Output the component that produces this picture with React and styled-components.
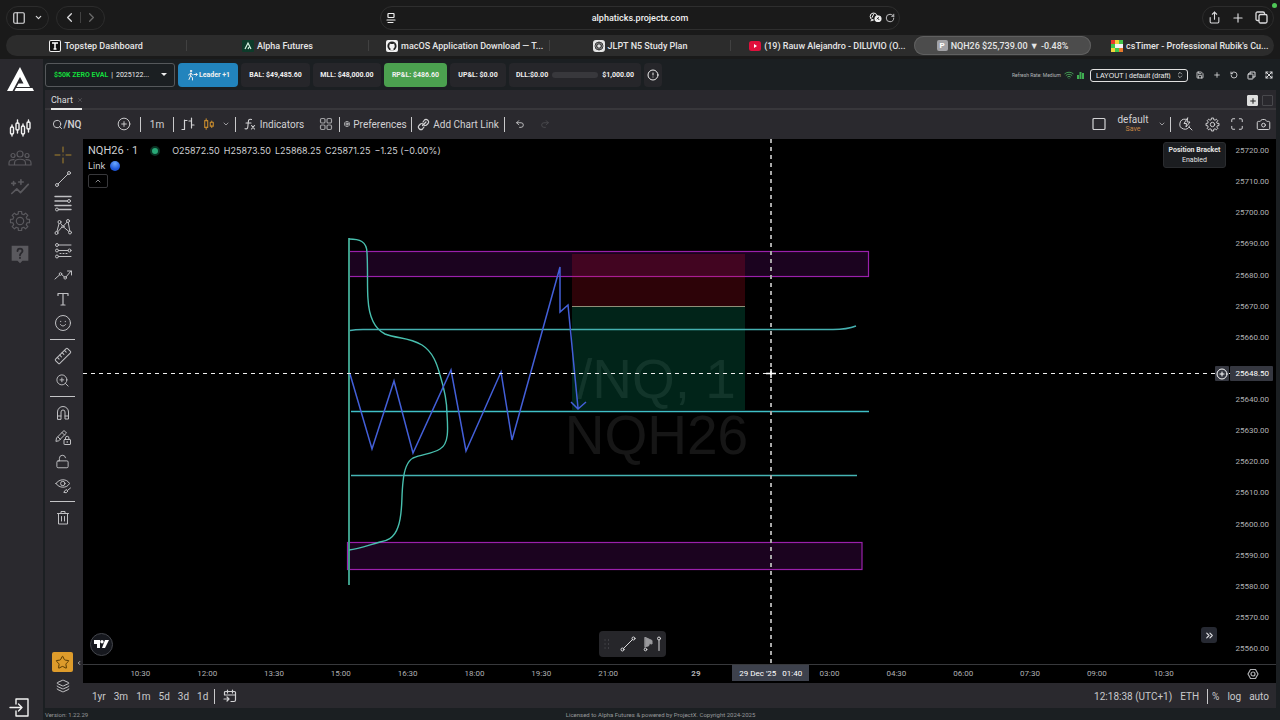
import React from "react";
import styled, { createGlobalStyle } from "styled-components";
import {
  PanelLeft, ChevronDown, ChevronLeft, ChevronRight, ChevronUp, Share, Plus, RotateCw,
  Wifi, Save, Undo2, Redo2, RotateCcw, Search, CirclePlus, Maximize, Camera,
  ZoomIn, LockOpen, Star, Layers, ChevronsRight, CircleAlert, ChevronsUpDown,
} from "lucide-react";

const GlobalStyle = createGlobalStyle`
  * { box-sizing: border-box; }
  body { margin: 0; background: #1a1a1a; color: #dcdcde; font-family: Roboto, "Liberation Sans", sans-serif; }
  button, select { font: inherit; color: inherit; background: none; border: 0; padding: 0; margin: 0; }
  svg { display: block; flex: none; }
`;

const Page = styled.div`
  min-height: 100vh;
  display: flex;
  flex-direction: column;
`;

/* Browser chrome */
const BrowserBar = styled.header`
  position: relative;
  display: flex;
  align-items: center;
  height: 35px;
  padding: 0 6px;
  gap: 6px;
`;
const Pill = styled.div`
  display: flex;
  align-items: center;
  justify-content: center;
  gap: ${(p) => p.$gap}px;
  height: 24px;
  padding: 0 5px;
  border: 1px solid #2c2c2c;
  border-radius: 12px;
`;
const Side = styled.div`
  flex: 1;
  display: flex;
  gap: 7px;
  justify-content: ${(p) => (p.$end ? "flex-end" : "flex-start")};
`;
const AddressBar = styled.div`
  display: grid;
  grid-template-columns: 40px 1fr 40px;
  align-items: center;
  width: 41%;
  height: 24px;
  padding: 0 4px;
  border: 1px solid #2e2e2e;
  border-radius: 12px;
  font-size: 9px;
  font-weight: 500;
  color: #f0f0f0;
  text-align: center;
`;
const AddressIcons = styled.span`
  display: flex;
  gap: 3px;
  align-items: center;
  justify-content: ${(p) => (p.$end ? "flex-end" : "flex-start")};
`;
const IconButton = styled.button`
  display: flex;
  align-items: center;
  justify-content: center;
  width: ${(p) => (p.$w ? p.$w + "px" : "auto")};
  height: ${(p) => (p.$h ? p.$h + "px" : "auto")};
  color: ${(p) => p.$color || "#dcdcde"};
`;
const RecordDot = styled.span`
  position: absolute;
  top: 3px;
  right: 3px;
  width: 5px;
  height: 5px;
  border-radius: 50%;
  background: #4fc857;
`;
const TabStrip = styled.nav`
  display: flex;
  height: 21px;
  margin: 0 6px 3px;
  background: #2c2c2c;
  border-radius: 11px;
`;
const BrowserTab = styled.button`
  flex: 1 1 0;
  min-width: 0;
  margin: 1px 2px;
  border-radius: 10px;
  background: ${(p) => (p.$active ? "#4c4c4c" : "transparent")};
  box-shadow: ${(p) => (p.$active ? "inset 0 0 0 1px #606060" : "none")};
  font-size: 9px;
  font-weight: 500;
  color: #e6e6e6;
  white-space: nowrap;
`;
const TabLabel = styled.span`
  display: flex;
  align-items: center;
  justify-content: center;
  gap: 3px;
  padding-left: ${(p) => (p.$long ? 12 : 0)}px;
`;
const TabDivider = styled.span`
  width: 1px;
  height: 11px;
  align-self: center;
  background: ${(p) => (p.$hidden ? "transparent" : "#414141")};
`;

/* Application frame */
const AppFrame = styled.div`
  flex: 1;
  display: flex;
  background: #1b1f22;
  padding-right: 4px;
`;
const Sidebar = styled.aside`
  display: flex;
  flex-direction: column;
  align-items: center;
  width: 43px;
  margin-right: 2px;
  padding: 8px 3px 0 0;
  background: #2a292e;
`;
const SideItem = styled.button`
  display: flex;
  align-items: center;
  justify-content: center;
  width: 30px;
  height: ${(p) => p.$h || 30}px;
  color: ${(p) => (p.$active ? "#f2f2f2" : "#5a595e")};
`;
const SideNav = styled.nav`
  display: flex;
  flex-direction: column;
  flex: 1;
  padding-top: 21px;
`;
const Main = styled.main`
  flex: 1;
  min-width: 0;
  display: flex;
  flex-direction: column;
`;
const AccountBar = styled.div`
  display: flex;
  align-items: center;
  gap: 3px;
  height: 31px;
  padding-top: 1px;
  font-size: 7px;
  font-weight: 700;
  color: #f0f0f0;
`;
const AccountBox = styled.label`
  display: flex;
  align-items: center;
  width: 130px;
  height: 24px;
  padding: 0 7px 0 8px;
  border: 1px solid #55585b;
  border-radius: 3px;
  font-weight: 400;
`;
const AccountName = styled.span`
  color: #14dc3c;
  font-weight: 700;
`;
const BareSelect = styled.select`
  appearance: none;
  flex: 1;
  min-width: 0;
  outline: 0;
`;
const Bar = styled.span`
  padding: 0 3px;
`;
const LeaderButton = styled.button`
  display: flex;
  align-items: center;
  justify-content: center;
  gap: 1px;
  width: 60px;
  height: 24px;
  border-radius: 4px;
  background: #2284bd;
`;
const Stat = styled.div`
  display: flex;
  align-items: center;
  justify-content: center;
  gap: 4px;
  width: ${(p) => p.$w}px;
  height: 24px;
  border-radius: 4px;
  background: ${(p) => (p.$green ? "#4ba14f" : "#26262a")};
  white-space: nowrap;
`;
const LossTrack = styled.span`
  width: 46px;
  height: 6px;
  border-radius: 3px;
  background: #38383c;
`;
const Spacer = styled.span`
  flex: 1;
`;
const Refresh = styled.span`
  font-size: 5px;
  font-weight: 400;
  color: #b4b6b8;
`;
const LayoutBox = styled.label`
  display: flex;
  align-items: center;
  width: 98px;
  height: 13px;
  padding: 0 3px 0 5px;
  border: 1px solid #e0e0e0;
  border-radius: 3px;
  font-family: "Liberation Sans", sans-serif;
  font-size: 7px;
  font-weight: 400;
  margin: 0 2px 0 3px;
`;
const HeaderIcons = styled.div`
  display: flex;
  justify-content: space-between;
  width: 83px;
  padding: 0 3px;
`;
const PanelTabs = styled.div`
  display: flex;
  align-items: center;
  height: 20px;
  padding: 0 3px 0 6px;
  gap: 4px;
  background: #29282d;
  border-bottom: 2px solid #38373b;
`;
const PanelTab = styled.button`
  display: flex;
  align-items: center;
  gap: 5px;
  height: 20px;
  margin-top: 2px;
  padding-top: 2px;
  width: 31px;
  border-bottom: 2px solid #e8e8e8;
  font-size: 9px;
`;
const TabTool = styled.button`
  display: flex;
  align-items: center;
  justify-content: center;
  width: 11px;
  height: 11px;
  margin-top: 3px;
  border: 1px solid ${(p) => (p.$solid ? "#dedede" : "#48484c")};
  border-radius: 1px;
  background: ${(p) => (p.$solid ? "#dedede" : "transparent")};
  color: #222;
`;

const ChartToolbar = styled.div`
  display: flex;
  align-items: center;
  height: 29px;
  padding: 0 0 1px 4px;
  background: #2a292e;
  font-size: 10px;
`;
const ToolbarButton = styled.button`
  display: flex;
  align-items: center;
  justify-content: center;
  gap: ${(p) => p.$gap || 4}px;
  width: ${(p) => p.$w}px;
  height: 26px;
  white-space: nowrap;
  font-weight: ${(p) => (p.$strong ? 500 : 400)};
  color: ${(p) => p.$color || "#d2d2d4"};
`;
const ToolbarLine = styled.span`
  width: 1px;
  height: 15px;
  margin-left: ${(p) => p.$before || 0}px;
  background: #c9c9cb;
`;
const LayoutName = styled.span`
  display: flex;
  flex-direction: column;
  align-items: center;
  line-height: 10px;
  small { font-size: 7px; line-height: 8px; color: #c68745; }
`;

const Workspace = styled.div`
  flex: 1;
  display: flex;
  background: #2a292e;
`;
const DrawTools = styled.div`
  display: flex;
  flex-direction: column;
  align-items: center;
  width: 38px;
  padding: 4px 3px 10px 0;
`;
const ToolLine = styled.span`
  width: 25px;
  height: 1px;
  margin: 4px 0;
  background: #c4c4c6;
`;
const Favorite = styled.button`
  display: flex;
  align-items: center;
  justify-content: center;
  width: 21px;
  height: 20px;
  border-radius: 2px;
  background: #dd9b2b;
  color: #4f3300;
  margin-bottom: 2px;
`;
const ChartColumn = styled.div`
  position: relative;
  flex: 1;
  min-width: 0;
  display: flex;
  flex-direction: column;
`;
const ToolsHandle = styled.button`
  position: absolute;
  left: -7px;
  bottom: 42px;
`;
const ChartGrid = styled.div`
  flex: 1;
  display: grid;
  grid-template-columns: 1fr 46px;
  grid-template-rows: 1fr 19px;
  background: #000;
  font-size: 8px;
  color: #b0b1b4;
`;
const Plot = styled.div`
  position: relative;
  min-height: 500px;
`;
const Drawing = styled.svg`
  position: absolute;
  inset: 0;
  width: 100%;
  height: 100%;
`;
const Watermark = styled.div`
  position: absolute;
  inset: 0;
  display: flex;
  flex-direction: column;
  align-items: center;
  justify-content: center;
  padding-top: 10px;
  font-family: "Liberation Sans", Arial, sans-serif;
  font-size: 55px;
  line-height: 56px;
  color: rgba(170, 170, 170, 0.13);
`;
const Legend = styled.div`
  position: absolute;
  top: 5px;
  left: 5px;
  display: flex;
  flex-direction: column;
  align-items: flex-start;
  gap: 2px;
  font-family: Inter, sans-serif;
  font-size: 9px;
  line-height: 13px;
  color: #cfd0d3;
`;
const LegendRow = styled.div`
  display: flex;
  align-items: center;
  gap: ${(p) => p.$gap}px;
`;
const Symbol = styled.span`
  font-family: Roboto, sans-serif;
  font-size: 11px;
`;
const MarketDot = styled.span`
  width: 10px;
  height: 10px;
  border-radius: 50%;
  border: 2px solid #0a3324;
  background: #29a877;
  margin: 0 8px;
`;
const LinkBall = styled.span`
  width: 10px;
  height: 10px;
  border-radius: 50%;
  background: radial-gradient(circle at 50% 25%, #6aa8ff, #1d56d8 65%);
`;
const CollapseButton = styled.button`
  display: flex;
  align-items: center;
  justify-content: center;
  width: 20px;
  height: 14px;
  border: 1px solid #38383b;
  border-radius: 2px;
`;
const Bracket = styled.div`
  position: absolute;
  top: 3px;
  right: 4px;
  width: 63px;
  padding: 2px 0;
  border: 1px solid #2a2c2f;
  border-radius: 3px;
  background: #1b1d20;
  font-size: 7px;
  line-height: 10px;
  text-align: center;
  color: #e3e3e3;
`;
const TvBadge = styled.div`
  position: absolute;
  left: 7px;
  bottom: 8px;
  display: flex;
  align-items: center;
  justify-content: center;
  width: 23px;
  height: 23px;
  border: 1px solid #44464c;
  border-radius: 50%;
  background: #16181e;
`;
const FloatingTools = styled.div`
  position: absolute;
  left: 45%;
  bottom: 7px;
  display: flex;
  align-items: center;
  width: 67px;
  height: 26px;
  border-radius: 4px;
  background: #26262a;
`;
const ScrollEnd = styled.button`
  position: absolute;
  right: 13px;
  bottom: 21px;
  display: flex;
  align-items: center;
  justify-content: center;
  width: 16px;
  height: 16px;
  border-radius: 3px;
  background: #262932;
  color: #e0e0e4;
`;
const PriceAxis = styled.div`
  position: relative;
  display: flex;
  flex-direction: column;
  justify-content: space-between;
  padding: 6px 7px 9px 0;
  line-height: 12px;
  text-align: right;
`;
const PriceSlot = styled.span`
  height: 12px;
`;
const PriceTag = styled.div`
  position: absolute;
  top: 45%;
  right: 3px;
  display: flex;
  align-items: center;
  gap: 1px;
  height: 15px;
  margin-top: -9px;
  line-height: 15px;
  color: #fff;
`;
const PriceTagPart = styled.span`
  display: flex;
  align-items: center;
  justify-content: flex-end;
  width: ${(p) => p.$w}px;
  height: 15px;
  padding-right: ${(p) => p.$pad}px;
  border-radius: 1px;
  background: #353740;
`;
const TimeAxis = styled.div`
  position: relative;
  display: grid;
  grid-template-columns: 24fr repeat(8, 67fr) 109fr 46fr repeat(6, 67fr) 33fr;
  line-height: 18px;
  border-top: 1px solid #38393c;
  text-align: center;
`;
const TimeTag = styled.div`
  position: absolute;
  top: 0;
  left: 60%;
  width: 77px;
  height: 16px;
  margin-left: -39px;
  line-height: 18px;
  background: #3d414c;
  color: #fff;
  white-space: pre;
`;
const AxisCorner = styled.button`
  display: flex;
  align-items: center;
  justify-content: center;
  border-top: 1px solid #38393c;
`;
const RangeBar = styled.div`
  display: flex;
  align-items: center;
  height: 25px;
  padding: 1px 3px 0 5px;
  font-size: 10px;
  color: #c9c9cc;
`;
const RangeButton = styled.button`
  padding: 0 4px;
  height: 20px;
`;
const Footer = styled.footer`
  display: grid;
  grid-template-columns: 1fr auto 1fr;
  align-items: center;
  height: 12px;
  font-size: 6px;
  color: #97999b;
  background: #1b1f22;
`;

const Glyph = ({ size = 24, w = 1, children, color = "currentColor", box = 24 }) => (
  <svg width={size} height={size} viewBox={`0 0 ${box} ${box}`} fill="none" stroke={color} strokeWidth={w} strokeLinecap="round" strokeLinejoin="round" aria-hidden="true">
    {children}
  </svg>
);

/* Outline of a cog with eight flat teeth, centred in a 24-unit box */
const cogOutline = (() => {
  const pts = [];
  for (let i = 0; i < 8; i++) {
    const base = (i * Math.PI) / 4;
    [[-0.24, 8], [-0.17, 10.5], [0.17, 10.5], [0.24, 8]].forEach(([a, r]) => {
      pts.push(`${(12 + r * Math.cos(base + a)).toFixed(2)} ${(12 + r * Math.sin(base + a)).toFixed(2)}`);
    });
  }
  return `M${pts.join("L")}Z`;
})();
const Cog = ({ size, w, hub = 3.5 }) => (
  <Glyph size={size} w={w}><path d={cogOutline} /><circle cx="12" cy="12" r={hub} /></Glyph>
);

const faviconArt = {
  topstep: (<><rect x="0" y="0" width="12" height="12" rx="2" fill="#f1f1f1" /><rect x="1" y="1" width="10" height="10" rx="1" fill="#111" /><path d="M3 3h6M6 3v6M4.500 9h3" stroke="#fff" strokeWidth="1.500" /></>),
  alpha: (<><rect width="12" height="12" rx="1" fill="#0d3b2a" /><path d="M3 9l3-6 3 6M6 9l1-2" stroke="#d8f5e4" strokeWidth="1.200" fill="none" /></>),
  github: (<><rect width="12" height="12" rx="2" fill="#f1f1f1" /><circle cx="6" cy="6" r="4.600" fill="#222" /><path d="M4.500 10.400V8.500C3 8 3 5.500 3.700 4.800L3.700 3.400 5 4h2l1.300-.6v1.400C9 5.500 9 8 7.500 8.500v1.900z" fill="#f1f1f1" /></>),
  gpt: (<><rect width="12" height="12" rx="3" fill="#e4e4e4" /><g fill="none" stroke="#333" strokeWidth="0.900"><circle cx="6" cy="6" r="4" /><path d="M6 2l3.500 6h-7zM6 10L2.500 4h7z" /></g></>),
  youtube: (<><rect y="1" width="12" height="10" rx="2.500" fill="#e0103c" /><path d="M5 4l3 2-3 2z" fill="#fff" /></>),
  cube: (<><path fill="#e83a2c" d="M0 0h4v4H0z" /><path fill="#f0d53a" d="M4 0h4v4H4zM0 8h4v4H0z" /><path fill="#41c64a" d="M8 0h4v4H8zM0 4h4v4H0zM4 8h4v4H4z" /><path fill="#f2f2f2" d="M4 4h8v4H4z" /><path fill="#e87a2c" d="M8 8h4v4H8z" /></>),
};
const FavBadge = styled.span`
  display: flex;
  align-items: center;
  justify-content: center;
  width: 11px;
  height: 11px;
  border-radius: 2px;
  background: #a2a2a6;
  font-size: 8px;
  font-weight: 700;
  color: #fff;
`;
const Favicon = ({ kind }) =>
  kind === "p" ? <FavBadge>P</FavBadge> : <svg width="12" height="12" viewBox="0 0 12 12" aria-hidden="true">{faviconArt[kind]}</svg>;

const tabs = [
  ["topstep", "Topstep Dashboard"],
  ["alpha", "Alpha Futures"],
  ["github", "macOS Application Download — T..."],
  ["gpt", "JLPT N5 Study Plan"],
  ["youtube", "(19) Rauw Alejandro - DILUVIO (O..."],
  ["p", "NQH26 $25,739.00 ▼ -0.48%"],
  ["cube", "csTimer - Professional Rubik's Cu..."],
];

const drawTools = [
  ["Cross", <Glyph color="#a8842c"><path d="M12 4v5M12 15v5M4 12h5M15 12h5M12 12h.1" /></Glyph>],
  ["Trend line", <Glyph><circle cx="6" cy="18" r="1.500" /><circle cx="18" cy="6" r="1.500" /><path d="M7 17L17 7" /></Glyph>],
  ["Fib retracement", <Glyph><path d="M4 5.500h16M4 10h12.500M4 14.500h16M7.500 18.500H20" strokeWidth="1.400" /><circle cx="18" cy="10" r="1.500" /><circle cx="6" cy="18.500" r="1.500" /></Glyph>],
  ["Pattern", <Glyph><path d="M5.500 18L8.500 7l3.500 4.500L17 6l2 11.500L12 11.500z" /><g fill="#2a292e"><circle cx="5.500" cy="18" r="1.500" /><circle cx="8.500" cy="7" r="1.500" /><circle cx="12" cy="11.500" r="1" /><circle cx="17" cy="6" r="1.500" /><circle cx="19" cy="17.500" r="1.500" /></g></Glyph>],
  ["Forecast", <Glyph><path d="M7.500 6H20M7.500 11.500h9.500M7.500 17.500H20" /><path d="M9 14.500h8" strokeDasharray="1 2" /><circle cx="6" cy="6" r="1.500" /><circle cx="6" cy="11.500" r="1.500" /><circle cx="6" cy="17.500" r="1.500" /><circle cx="18.500" cy="11.500" r="1.500" /></Glyph>],
  ["Arrow path", <Glyph><path d="M4 16l4.500-4M10.500 11.500l3 2.500M15 14l5-6M16.500 8H20.500V12" /><circle cx="9.500" cy="11" r="1.300" /><circle cx="14.200" cy="14.800" r="1.300" /></Glyph>],
  ["Text", <Glyph w={1.2}><path d="M7 8.500V6.500h10v2M12 6.500v11.500M10 18h4" /></Glyph>],
  ["Emoji", <Glyph><circle cx="12" cy="12" r="7.500" /><path d="M9.500 13.500c1 2 4 2 5 0M9.700 10.300v.4M14.300 10.300v.4" /></Glyph>],
  null,
  ["Measure", <Glyph><g transform="rotate(-45 12 12)"><rect x="3.500" y="9" width="17" height="6" rx="1" /><path d="M7 9v2.500M10.300 9v2.500M13.700 9v2.500M17 9v2.500" /></g></Glyph>],
  ["Zoom", <ZoomIn size={15} strokeWidth={1.5} />],
  null,
  ["Magnet", <Glyph><path d="M6.500 18v-7a5.500 5.500 0 0111 0v7h-3.500v-7a2 2 0 00-4 0v7zM6.500 15h3.500M14 15h3.500" /></Glyph>],
  ["Keep drawing", <Glyph><path d="M5 16l.5-3 7.500-7.500 2.500 2.500L8 15.500zM11 7.500l2.500 2.500M7 12l2.500 2.500" /><rect x="13" y="14.500" width="6.500" height="5" rx="0.500" /><path d="M14.500 14.500v-1.500a1.700 1.700 0 013.400 0v1.500M16.200 16.500v1" /></Glyph>],
  ["Lock", <LockOpen size={15} strokeWidth={1.5} />],
  ["Hide", <Glyph><path d="M5 10.500C8 5.500 16 5.500 18.500 10.500 16 15.500 8 15.500 5 10.500z" /><circle cx="11.800" cy="10.500" r="2.200" /><path d="M13 19l2-2.500 2 1.500-1.500 1.500zM17 17l2.500-2" /></Glyph>],
  null,
  ["Remove", <Glyph><path d="M6.500 7.500h11M10 7.500V5.500h4v2M7.500 7.500V18h9V7.500M10.500 10.500V15M13.500 10.500V15" /></Glyph>],
];

/* The 25650 label sits behind the crosshair price tag, so its slot stays empty */
const prices = Array.from({ length: 17 }, (_, i) => 25720 - i * 10);
const times = ["", "10:30", "12:00", "13:30", "15:00", "16:30", "18:00", "19:30", "21:00", "29", "", "03:00", "04:30", "06:00", "07:30", "09:00", "10:30", ""];

function ChartDrawing() {
  return (
    <Drawing viewBox="0 0 1147 525" preserveAspectRatio="none" fill="none" aria-label="Price chart drawings">
      <rect x="266" y="112.500" width="519.500" height="25" fill="#a010b8" fillOpacity="0.170" stroke="#9a20ab" strokeWidth="1.200" />
      <rect x="264.500" y="403.500" width="514.500" height="27" fill="#a010b8" fillOpacity="0.170" stroke="#9a20ab" strokeWidth="1.200" />
      <rect x="489" y="115" width="173" height="52" fill="#f0102a" fillOpacity="0.190" />
      <rect x="489" y="167" width="173" height="104" fill="#06a878" fillOpacity="0.210" />
      <path d="M489 167.500H662" stroke="#8f8f78" />
      <path d="M266 99V446" stroke="#3d9c88" strokeWidth="2" />
      <path d="M266 100C276 100 284 102 284 114C285 130 284 150 285 160C286 178 292 190 302 195C315 200 325 198 339 206C350 213 354 225 357 236C362 252 364 262 364 275C365 290 366 305 357 310C349 315 340 315 330 319C323 323 321 332 320 343C318 360 320 375 315 388C311 400 303 402 297 403C286 406 276 410 266 411" stroke="#48bfae" strokeWidth="1.400" />
      <path d="M267 191.500Q272 190.500 280 190.500H750Q764 190.500 773 187" stroke="#45b0b0" strokeWidth="1.500" />
      <path d="M268 272.500H786" stroke="#3fbfc6" strokeWidth="1.600" />
      <path d="M268 336.500H774" stroke="#45b4b4" strokeWidth="1.600" />
      <path d="M267 235L289 310 311 242 330 314 368 231 383 312 418 233 429 301 477 128 477 173 485 166 495 269M488 263L495 270 503 263" stroke="#435fd8" strokeWidth="1.500" />
      <path d="M0 234.500H1147" stroke="#f0f0f0" strokeDasharray="4 4" />
      <path d="M688 0V525" stroke="#a8a8a8" strokeWidth="2" strokeDasharray="4 4" />
      <path d="M683 234.500h10M688 230v9" stroke="#fff" strokeWidth="1.500" />
    </Drawing>
  );
}

export default function App() {
  return (
    <Page>
      <GlobalStyle />
      <BrowserBar>
        <Side>
          <Pill $gap={8}>
            <IconButton aria-label="Sidebar"><PanelLeft size={14} strokeWidth={2} /></IconButton>
            <IconButton aria-label="Tab groups"><ChevronDown size={9} strokeWidth={3} /></IconButton>
          </Pill>
          <Pill $gap={3}>
            <IconButton aria-label="Back"><ChevronLeft size={15} /></IconButton>
            <TabDivider />
            <IconButton aria-label="Forward" $color="#6a6a6a"><ChevronRight size={15} /></IconButton>
          </Pill>
        </Side>
        <AddressBar>
          <AddressIcons>
            <Glyph size={12} box={12} w={1.2}><rect x="3" y="1.500" width="6" height="4" rx="0.500" /><path d="M2 8h8M3 10.500h5" /></Glyph>
          </AddressIcons>
          <span>alphaticks.projectx.com</span>
          <AddressIcons $end>
            <Glyph size={13} box={13} w={1}><path d="M8 4.500A3.500 3.500 0 104.500 9L2 9.800M3 6.500l1.500-3" /><rect x="6" y="5" width="6" height="5.500" rx="2" fill="currentColor" /><path d="M8 8l1.500-1.500M8.500 7L10 8.700" stroke="#222" /></Glyph>
            <IconButton aria-label="Reload"><RotateCw size={10} /></IconButton>
          </AddressIcons>
        </AddressBar>
        <Side $end>
          <Pill $gap={10}>
            <IconButton aria-label="Share"><Share size={13} /></IconButton>
            <IconButton aria-label="New tab"><Plus size={14} /></IconButton>
            <IconButton aria-label="Tab overview"><Glyph size={13} box={13} w={1.3}><path d="M3.500 9.500H2.500q-1.500 0-1.500-1.500V2.500Q1 1 2.500 1H8q1.500 0 1.500 1.500" /><rect x="4" y="3.500" width="8" height="8.500" rx="1.500" /></Glyph></IconButton>
          </Pill>
        </Side>
        <RecordDot />
      </BrowserBar>
      <TabStrip>
        {tabs.map(([kind, title], i) => (
          <React.Fragment key={title}>
            <BrowserTab $active={kind === "p"}>
              <TabLabel $long={title.endsWith("...")}>
                <Favicon kind={kind} />
                {title}
              </TabLabel>
            </BrowserTab>
            {i < 6 && <TabDivider $hidden={i > 3} />}
          </React.Fragment>
        ))}
      </TabStrip>

      <AppFrame>
        <Sidebar>
          <svg width="28" height="25" viewBox="0 0 28 25" aria-label="Logo">
            <path fill="#fff" d="M14 0L1 24h5.500L14 10l3.500 6.500h-5L10.500 20H24zM10 21h16.500l1.500 3H8.500z" />
          </svg>
          <SideNav>
            <SideItem $active aria-label="Trading"><Glyph size={22} box={22} w={1.4}><path d="M3 8v2M3 17v2M8.500 3v3M8.500 13v3M14 7v2M14 17v2M19.500 3v2M19.500 12v3" /><rect x="1.500" y="10" width="3" height="7" rx="1" /><rect x="7" y="6" width="3" height="7" rx="1" /><rect x="12.500" y="9" width="3" height="8" rx="1" /><rect x="18" y="5" width="3" height="7" rx="1" /></Glyph></SideItem>
            <SideItem aria-label="Community"><Glyph w={1.2}><circle cx="12" cy="8" r="3" /><circle cx="5" cy="9.500" r="2" /><circle cx="19" cy="9.500" r="2" /><path d="M6.500 19v-2c0-5 11-5 11 0v2zM6 19H1v-2c0-2.500 2-3.500 5-3.300M18 19h5v-2c0-2.500-2-3.500-5-3.300" /></Glyph></SideItem>
            <SideItem aria-label="Insights"><Glyph size={22} w={1.8}><path d="M3 18l5.500-5 4 4L21 8" /><path d="M13 3v5M10.500 5.500h5M5 5v4M3 7h4" /></Glyph></SideItem>
            <SideItem aria-label="Settings" $h={36}><Cog size={22} w={1.3} hub={4} /></SideItem>
            <SideItem aria-label="Help"><Glyph size={20} w={2.2}><path d="M2 2h20v18h-7l-3 3-3-3H2z" fill="currentColor" stroke="none" /><path d="M9 8.500c0-4 6-4 6 0 0 2-3 2.500-3 5M12 16.500v.3" stroke="#2a292e" /></Glyph></SideItem>
          </SideNav>
          <SideItem $active $h={26} aria-label="Log out"><Glyph size={22} box={22} w={1.4}><path d="M7 8V3h12v17H7v-5M1 11.500h12M9.500 8l3.500 3.500L9.500 15" /></Glyph></SideItem>
        </Sidebar>

        <Main>
          <AccountBar>
            <AccountBox>
              <AccountName>$50K ZERO EVAL</AccountName>
              <Bar>|</Bar>
              <BareSelect aria-label="Account"><option>2025122...</option></BareSelect>
              <svg width="6" height="4" viewBox="0 0 6 4"><path d="M0 0h6L3 3z" fill="#eee" /></svg>
            </AccountBox>
            <LeaderButton>
              <Glyph size={12} box={12} w={1}><circle cx="5" cy="2" r="0.700" fill="currentColor" /><path d="M5 4L4.500 7l2 1.500V11M4.500 7L3 10.500M2.500 6L5 4l1.500 2M8 5.500h3M10 4.200l1.300 1.300L10 6.800" /></Glyph>
              Leader +1
            </LeaderButton>
            <Stat $w={69}>BAL: $49,485.60</Stat>
            <Stat $w={68}>MLL: $48,000.00</Stat>
            <Stat $w={63} $green>RP&amp;L: $486.60</Stat>
            <Stat $w={56}>UP&amp;L: $0.00</Stat>
            <Stat $w={132}><span>DLL:$0.00</span><LossTrack /><span>$1,000.00</span></Stat>
            <Stat $w={18} as="button" aria-label="Information"><CircleAlert size={12} /></Stat>
            <Spacer />
            <Refresh>Refresh Rate: Medium</Refresh>
            <Wifi size={10} color="#4bb35c" />
            <svg width="7" height="8" viewBox="0 0 7 8"><path d="M0 4h2v4H0zM2.500 1h2v7h-2zM5 2h2v6H5z" fill="#3fae52" /></svg>
            <LayoutBox>
              <BareSelect aria-label="Layout"><option>LAYOUT | default (draft)</option></BareSelect>
              <ChevronsUpDown size={8} />
            </LayoutBox>
            <HeaderIcons>
              <IconButton aria-label="Save layout"><Save size={8} strokeWidth={2.5} /></IconButton>
              <IconButton aria-label="Add layout"><Plus size={8} strokeWidth={2.5} /></IconButton>
              <IconButton aria-label="Reset layout"><RotateCcw size={8} strokeWidth={2.5} /></IconButton>
              <IconButton aria-label="Duplicate layout"><Glyph size={9} box={9} w={1}><rect x="1" y="3" width="5" height="5" rx="0.500" /><path d="M3 3V1h5v5H6" /></Glyph></IconButton>
              <IconButton aria-label="Expand"><Glyph size={8} box={8} w={1}><path d="M1 1l6 6M7 1L1 7M1 3V1h2M5 1h2v2M7 5v2H5M3 7H1V5" /></Glyph></IconButton>
            </HeaderIcons>
          </AccountBar>
          <PanelTabs>
            <PanelTab>Chart<Glyph size={4} box={4} color="#4c4b50"><path d="M.5.5l3 3M3.500.5l-3 3" /></Glyph></PanelTab>
            <Spacer />
            <TabTool $solid aria-label="Add tab"><Plus size={8} strokeWidth={3} /></TabTool>
            <TabTool aria-label="Maximise" />
          </PanelTabs>

          <ChartToolbar>
            <ToolbarButton $w={35} $gap={1} $strong><Search size={11} />/NQ</ToolbarButton>
            <ToolbarButton $w={47} aria-label="Compare"><Spacer /><CirclePlus size={14} strokeWidth={1.600} /></ToolbarButton>
            <ToolbarLine $before={9} />
            <ToolbarButton $w={32}>1m</ToolbarButton>
            <ToolbarLine />
            <ToolbarButton $w={28} aria-label="Bars"><Glyph size={14} box={14} w={1.2}><path d="M3.500 3v9.500M1 12.500h2.500M3.500 3.500H6M10.500 1v10M8 4h2.500M10.500 8H13" /></Glyph></ToolbarButton>
            <ToolbarButton $w={14} $color="#c58a2e" aria-label="Candles"><Glyph size={12} box={14} w={1.3}><rect x="2" y="3" width="3.500" height="8" /><path d="M3.700 1v2M3.700 11v2M10.200 3.500V5M10.200 9.500V11" /><rect x="8.500" y="5" width="3.500" height="4.500" /></Glyph></ToolbarButton>
            <ToolbarButton $w={19} aria-label="Chart type"><ChevronDown size={8} /></ToolbarButton>
            <ToolbarLine />
            <ToolbarButton $w={76} $gap={4}><Glyph size={12} box={12} w={1.100}><path d="M7.500 1.500C5 .5 4.500 2 4.300 4L3.800 9C3.600 11 2.500 11 1 10.700M2 5h5M7.500 7.500l3 3.500M10.500 7.500l-3 3.500" /></Glyph>Indicators</ToolbarButton>
            <ToolbarButton $w={27} aria-label="Templates"><Glyph size={14} box={14} w={1.200} color="#a0a0a3"><rect x="1.500" y="1.500" width="4.500" height="4.500" rx="1.200" /><rect x="8" y="1.500" width="4.500" height="4.500" rx="1.200" /><rect x="1.500" y="8" width="4.500" height="4.500" rx="1.200" /><rect x="8" y="8" width="4.500" height="4.500" rx="1.200" /></Glyph></ToolbarButton>
            <ToolbarLine />
            <ToolbarButton $w={71} $gap={3}><Cog size={6} w={3} />Preferences</ToolbarButton>
            <ToolbarLine />
            <ToolbarButton $w={92} $gap={3}><Glyph size={13} box={13} w={1.200}><path d="M5.500 7.500L9 4M6 4l1.500-2a2 2 0 013 0l.5.500a2 2 0 010 3L9.500 7a2 2 0 01-2.500 0M7 9l-1.500 2a2 2 0 01-3 0L2 10.500a2 2 0 010-3L3.500 6A2 2 0 016 6" /></Glyph>Add Chart Link</ToolbarButton>
            <ToolbarLine />
            <ToolbarButton $w={30} aria-label="Undo"><Undo2 size={10} /></ToolbarButton>
            <ToolbarButton $w={20} $color="#4d4d51" aria-label="Redo"><Redo2 size={10} /></ToolbarButton>
            <Spacer />
            <ToolbarButton $w={26} aria-label="Layout setup"><Glyph size={14} box={14} w={1.200}><rect x="1" y="1.500" width="12" height="11" rx="1" /></Glyph></ToolbarButton>
            <ToolbarButton $w={42}><LayoutName>default<small>Save</small></LayoutName></ToolbarButton>
            <ToolbarButton $w={16} aria-label="Layouts"><ChevronDown size={8} /></ToolbarButton>
            <ToolbarLine />
            <ToolbarButton $w={30} aria-label="Quick search"><Glyph size={14} box={14} w={1}><path d="M6.500 2.200A5 5 0 1010.500 9M10.300 10.300l2.700 2.700M8.500 1L5 6.500h2.500L7 10l4-5H8.500z" /></Glyph></ToolbarButton>
            <ToolbarButton $w={23} aria-label="Chart settings"><Cog size={15} w={1.6} /></ToolbarButton>
            <ToolbarButton $w={26} aria-label="Fullscreen"><Maximize size={14} strokeWidth={1.700} /></ToolbarButton>
            <ToolbarButton $w={26} aria-label="Snapshot"><Camera size={15} strokeWidth={1.600} /></ToolbarButton>
          </ChartToolbar>

          <Workspace>
            <DrawTools>
              {drawTools.map((t, i) =>
                t ? <IconButton key={i} $w={24} $h={24} $color="#c0c0c3" aria-label={t[0]}>{t[1]}</IconButton> : <ToolLine key={i} />
              )}
              <Spacer />
              <Favorite aria-label="Favorites"><Star size={15} strokeWidth={1.500} /></Favorite>
              <IconButton $w={24} $h={24} aria-label="Object tree"><Layers size={14} strokeWidth={1.500} /></IconButton>
            </DrawTools>
            <ChartColumn>
              <ToolsHandle aria-label="Hide tools"><ChevronLeft size={6} strokeWidth={3} /></ToolsHandle>
              <ChartGrid>
                <Plot>
                  <Watermark><span>/NQ, 1</span><span>NQH26</span></Watermark>
                  <ChartDrawing />
                  <Legend>
                    <LegendRow $gap={4}>
                      <Symbol>NQH26 · 1</Symbol>
                      <MarketDot />
                      <span>O25872.50</span><span>H25873.50</span><span>L25868.25</span><span>C25871.25</span><span>−1.25 (−0.00%)</span>
                    </LegendRow>
                    <LegendRow $gap={4}>Link <LinkBall /></LegendRow>
                    <CollapseButton aria-label="Collapse legend"><ChevronUp size={8} /></CollapseButton>
                  </Legend>
                  <Bracket><b>Position Bracket</b><br />Enabled</Bracket>
                  <TvBadge><svg width="15" height="9" viewBox="0 0 15 9"><path fill="#fff" d="M0 0h6v8H3V4H0zM11 0h4l-4 8H8z" /><circle cx="8" cy="1.800" r="1.700" fill="#fff" /></svg></TvBadge>
                  <FloatingTools>
                    <Glyph size={16} box={16} color="#5e5e63"><path d="M6 4h.1M9.500 4h.1M6 8h.1M9.500 8h.1M6 12h.1M9.500 12h.1" /></Glyph>
                    <IconButton aria-label="Trend line" $w={26}><Glyph size={16} box={16}><circle cx="2.500" cy="13.500" r="1.500" /><circle cx="13.500" cy="2.500" r="1.500" /><path d="M3.500 12.500l9-9" /></Glyph></IconButton>
                    <IconButton aria-label="Flag" $w={14}><Glyph size={16} box={16}><path d="M5 1.500v10M5.500 1.500l6.500 3v3.500l-2.500-.5-1 2.500-3 .5z" fill="#9a9a9d" stroke="#9a9a9d" /><circle cx="5.500" cy="13.500" r="1.300" /></Glyph></IconButton>
                    <IconButton aria-label="Vertical line" $w={8}><Glyph size={16} box={16}><circle cx="8" cy="2.500" r="1.500" /><path d="M8 4.500v10" /></Glyph></IconButton>
                  </FloatingTools>
                  <ScrollEnd aria-label="Scroll to latest"><ChevronsRight size={11} strokeWidth={2.5} /></ScrollEnd>
                </Plot>
                <PriceAxis>
                  {prices.map((p) => <PriceSlot key={p}>{p === 25650 ? null : `${p}.00`}</PriceSlot>)}
                  <PriceTag>
                    <PriceTagPart $w={14} $pad={1}><CirclePlus size={12} strokeWidth={2} /></PriceTagPart>
                    <PriceTagPart $w={43} $pad={4}>25648.50</PriceTagPart>
                  </PriceTag>
                </PriceAxis>
                <TimeAxis>
                  {times.map((t, i) => (t === "29" ? <b key={i}>{t}</b> : <span key={i}>{t}</span>))}
                  <TimeTag>{"29 Dec '25   01:40"}</TimeTag>
                </TimeAxis>
                <AxisCorner aria-label="Scale settings"><Glyph size={12} box={12} w={1.200}><path d="M3.500 1.500h5L11 6l-2.500 4.500h-5L1 6z" /><circle cx="6" cy="6" r="2" /></Glyph></AxisCorner>
              </ChartGrid>
              <RangeBar>
                {["1yr", "3m", "1m", "5d", "3d", "1d"].map((r) => <RangeButton key={r}>{r}</RangeButton>)}
                <ToolbarLine $before={2} />
                <ToolbarButton $w={30} aria-label="Go to date"><Glyph size={14} box={14} w={1.200}><path d="M1.500 6V3.500q0-1 1-1h9q1 0 1 1V11q0 1.500-1.500 1.500H8M4.500 1v3M9.500 1v3M1.500 6h11M1 10h5M4 8l2 2-2 2" /></Glyph></ToolbarButton>
                <Spacer />
                <RangeButton>12:18:38 (UTC+1)</RangeButton>
                <RangeButton>ETH</RangeButton>
                <ToolbarLine $before={4} />
                <RangeButton>%</RangeButton>
                <RangeButton>log</RangeButton>
                <RangeButton>auto</RangeButton>
              </RangeBar>
            </ChartColumn>
          </Workspace>
          <Footer>
            <span>Version: 1.22.29</span>
            <span>Licensed to Alpha Futures &amp; powered by ProjectX. Copyright 2024-2025</span>
          </Footer>
        </Main>
      </AppFrame>
    </Page>
  );
}
